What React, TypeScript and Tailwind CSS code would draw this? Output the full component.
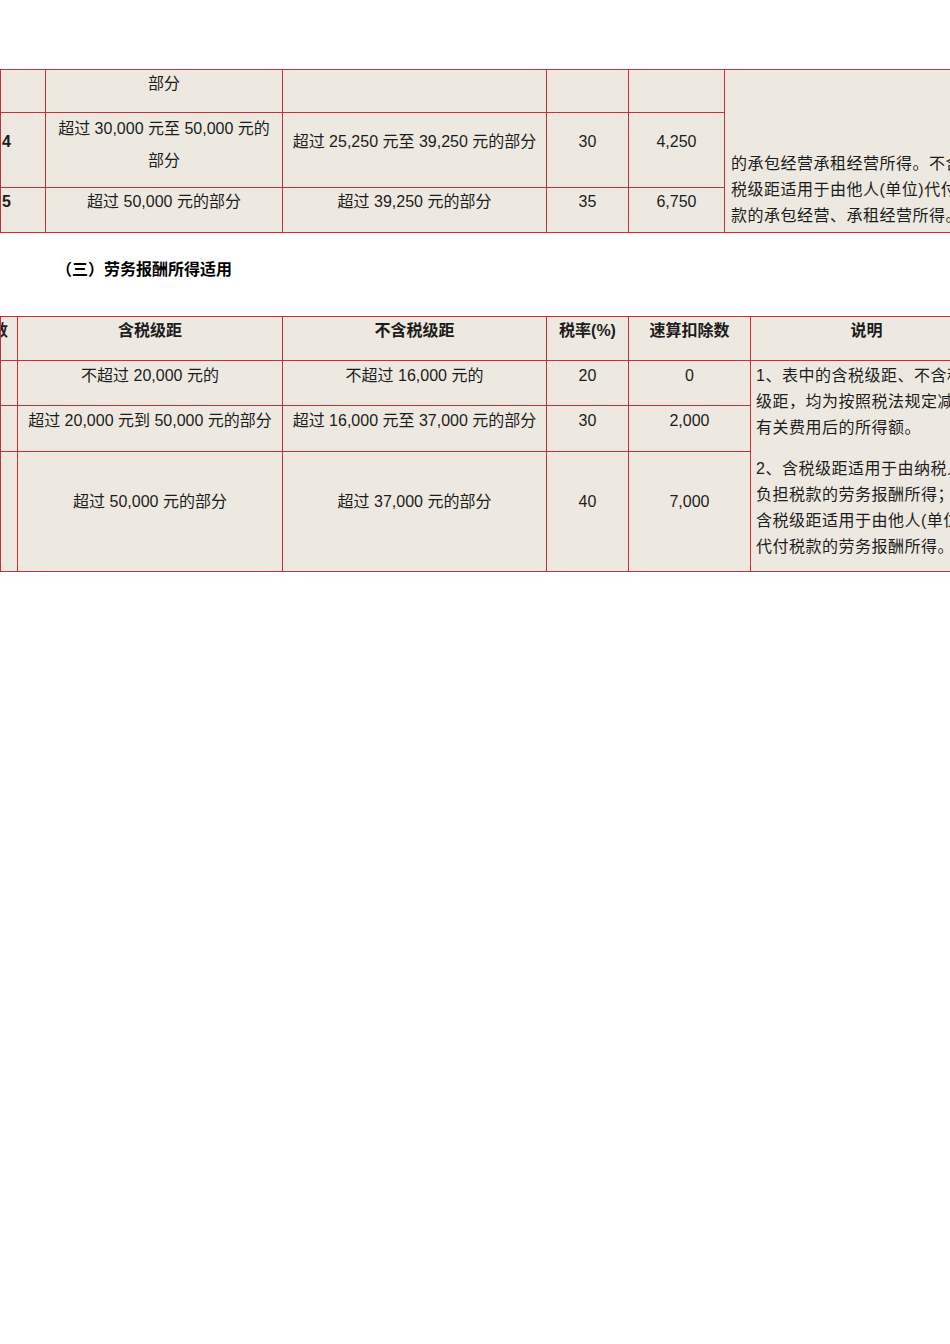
import React from "react";

const font = "font-['Liberation_Sans','Noto_Sans_CJK_SC',sans-serif]";

interface CellProps {
	children?: React.ReactNode;
	className?: string;
}

// one table cell: right + bottom border, table supplies top + left
const Cell: React.FC<CellProps> = ({ children, className = "" }) => (
	<div className={`border-r border-b border-[#c4303b] bg-[#ede9e0] overflow-hidden ${className}`}>
		{children}
	</div>
);

const BusinessTable: React.FC = () => (
	<div className="grid grid-cols-[45px_237px_264px_82px_96px_258px] grid-rows-[43px_75px_45px] border-t border-l border-[#c4303b] w-[982px]">
		<Cell />
		<Cell className="pt-[2px] text-center leading-[24px]">部分</Cell>
		<Cell />
		<Cell />
		<Cell />
		<Cell className="row-span-3 flex flex-col justify-end pb-[3px] pl-[6px] leading-[26px] tracking-[0.5px] whitespace-nowrap">
			<div>的承包经营承租经营所得。不含</div>
			<div>税级距适用于由他人(单位)代付税</div>
			<div>款的承包经营、承租经营所得。</div>
		</Cell>

		<Cell className="pt-[17px] pl-[1px] font-bold leading-[24px]">4</Cell>
		<Cell className="text-center leading-[32px]">
			<div>超过 30,000 元至 50,000 元的</div>
			<div>部分</div>
		</Cell>
		<Cell className="pt-[17px] text-center leading-[24px]">超过 25,250 元至 39,250 元的部分</Cell>
		<Cell className="pt-[17px] text-center leading-[24px]">30</Cell>
		<Cell className="pt-[17px] text-center leading-[24px]">4,250</Cell>

		<Cell className="pt-[2px] pl-[1px] font-bold leading-[24px]">5</Cell>
		<Cell className="pt-[2px] text-center leading-[24px]">超过 50,000 元的部分</Cell>
		<Cell className="pt-[2px] text-center leading-[24px]">超过 39,250 元的部分</Cell>
		<Cell className="pt-[2px] text-center leading-[24px]">35</Cell>
		<Cell className="pt-[2px] text-center leading-[24px]">6,750</Cell>
	</div>
);

const ServiceTable: React.FC = () => (
	<div className="grid grid-cols-[17px_265px_264px_82px_122px_232px] grid-rows-[44px_45px_46px_120px] border-t border-l border-[#c4303b] w-[982px]">
		<Cell className="pt-[2px] flex justify-end pr-[9px] font-bold leading-[24px] whitespace-nowrap">级数</Cell>
		<Cell className="pt-[2px] text-center font-bold leading-[24px]">含税级距</Cell>
		<Cell className="pt-[2px] text-center font-bold leading-[24px]">不含税级距</Cell>
		<Cell className="pt-[2px] text-center font-bold leading-[24px]">税率(%)</Cell>
		<Cell className="pt-[2px] text-center font-bold leading-[24px]">速算扣除数</Cell>
		<Cell className="pt-[2px] text-center font-bold leading-[24px]">说明</Cell>

		<Cell />
		<Cell className="pt-[3px] text-center leading-[24px]">不超过 20,000 元的</Cell>
		<Cell className="pt-[3px] text-center leading-[24px]">不超过 16,000 元的</Cell>
		<Cell className="pt-[3px] text-center leading-[24px]">20</Cell>
		<Cell className="pt-[3px] text-center leading-[24px]">0</Cell>
		<Cell className="row-span-3 pt-[2px] pl-[5px] leading-[26px] tracking-[0.5px] whitespace-nowrap">
			<div>1、表中的含税级距、不含税</div>
			<div>级距，均为按照税法规定减除</div>
			<div>有关费用后的所得额。</div>
			<div className="mt-[15px]">2、含税级距适用于由纳税人</div>
			<div>负担税款的劳务报酬所得；不</div>
			<div>含税级距适用于由他人(单位)</div>
			<div>代付税款的劳务报酬所得。</div>
		</Cell>

		<Cell />
		<Cell className="pt-[3px] text-center leading-[24px] whitespace-nowrap">超过 20,000 元到 50,000 元的部分</Cell>
		<Cell className="pt-[3px] text-center leading-[24px] whitespace-nowrap">超过 16,000 元至 37,000 元的部分</Cell>
		<Cell className="pt-[3px] text-center leading-[24px]">30</Cell>
		<Cell className="pt-[3px] text-center leading-[24px]">2,000</Cell>

		<Cell />
		<Cell className="pt-[38px] text-center leading-[24px]">超过 50,000 元的部分</Cell>
		<Cell className="pt-[38px] text-center leading-[24px]">超过 37,000 元的部分</Cell>
		<Cell className="pt-[38px] text-center leading-[24px]">40</Cell>
		<Cell className="pt-[38px] text-center leading-[24px]">7,000</Cell>
	</div>
);

export default function App() {
	return (
		<div className={`${font} w-[950px] h-[1344px] overflow-hidden bg-white text-[16px] text-[#1c1c1c] pt-[69px]`}>
			<BusinessTable />
			<h3 className="mt-[25px] ml-[56px] text-[16px] font-bold leading-[24px] text-black">
				（三）劳务报酬所得适用
			</h3>
			<div className="mt-[34px]">
				<ServiceTable />
			</div>
		</div>
	);
}
